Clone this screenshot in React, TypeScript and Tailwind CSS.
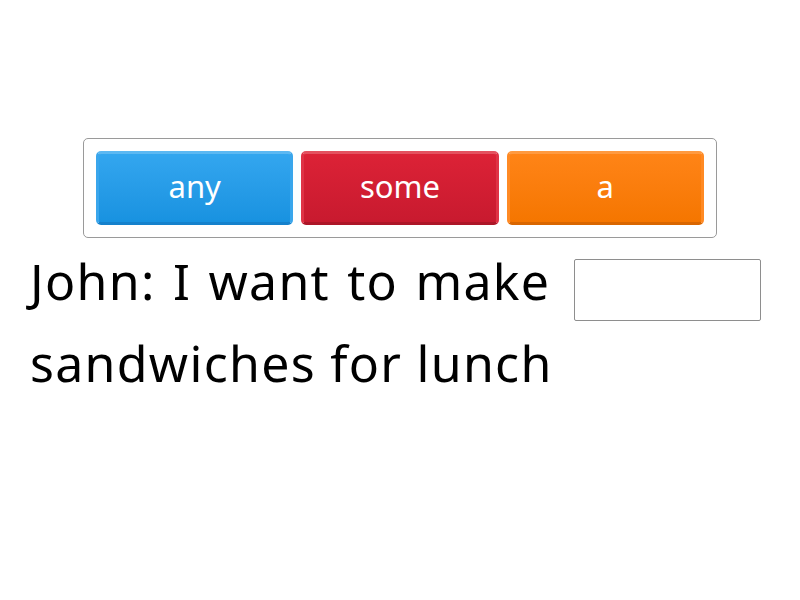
export default function App() {
  const tiles = [
    { label: "any", cls: "bg-gradient-to-b from-[#33a6ef] to-[#1892e0] border-t-[#5cb8f2] border-x-[#3aa6ec] border-b-[#1581cc]" },
    { label: "some", cls: "bg-gradient-to-b from-[#dc2236] to-[#c81a2f] border-t-[#e4515f] border-x-[#df3346] border-b-[#ad1628]" },
    { label: "a", cls: "bg-gradient-to-b from-[#ff8416] to-[#f57600] border-t-[#ff9a40] border-x-[#ff8a24] border-b-[#d96600]" },
  ];

  return (
    <div className="w-[800px] h-[600px] bg-white font-['Noto_Sans',sans-serif] text-black">
      {/* Answer bank */}
      <div className="pt-[138px] flex justify-center">
        <div className="w-[634px] h-[100px] border border-[#9a9a9a] rounded-[5px] px-[12px] py-[12px] flex gap-[8px]">
          {tiles.map((t) => (
            <div
              key={t.label}
              className={`flex-1 h-[74px] rounded-[5px] border-[3px] flex items-center justify-center text-white text-[31px] leading-none pb-[3px] ${t.cls}`}
            >
              {t.label}
            </div>
          ))}
        </div>
      </div>

      {/* Sentence */}
      <div className="pl-[30px] pr-[30px] mt-[2px] text-[50px] leading-[82px] tracking-[1.3px]">
        <span className="[word-spacing:3px]">John: I want to make</span>{" "}
        <span className="inline-block align-middle w-[187px] h-[62px] border border-[#8e8e8e] rounded-[2px] ml-[9px] -mb-[6px]" />
        <br />
        sandwiches for lunch
      </div>
    </div>
  );
}
